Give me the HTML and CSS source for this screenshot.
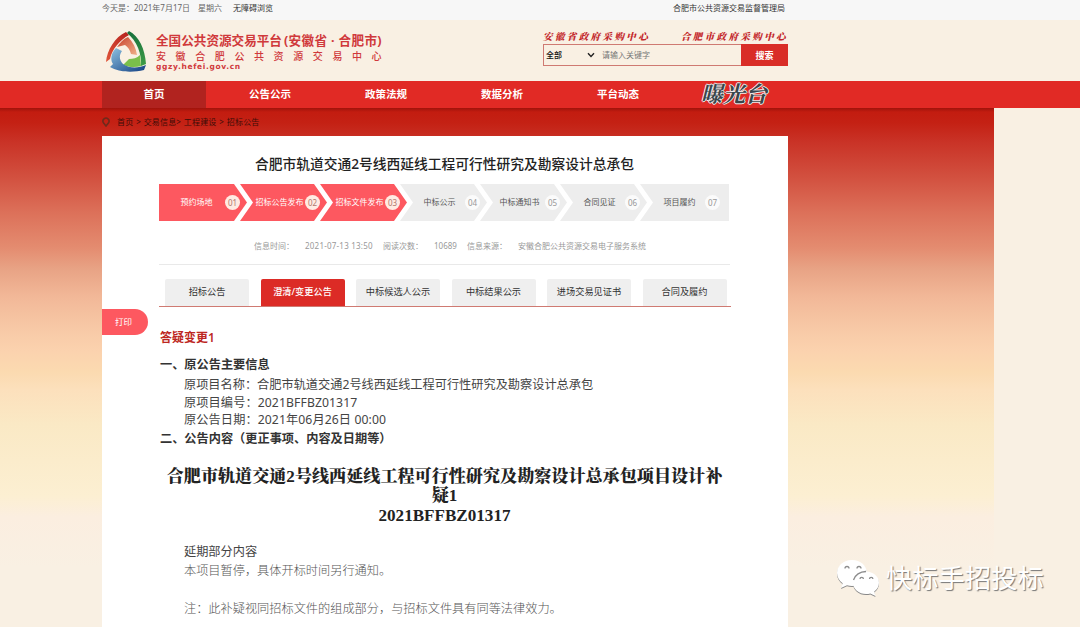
FILE: index.html
```html
<!DOCTYPE html>
<html lang="zh-CN">
  <head>
    <meta charset="UTF-8" />
    <meta name="viewport" content="width=device-width, initial-scale=1.0" />
    <title>安徽合肥公共资源交易中心</title>
    <link rel="stylesheet" href="styles.css">
  </head>
  <body>
    <div class="topbar">
      <div class="container topbar-inner">
        <div class="topbar-left">
          <span>今天是：2021年7月17日</span>
          <span>星期六</span>
          <a class="dark">无障碍浏览</a>
        </div>
        <a class="dark bureau">合肥市公共资源交易监督管理局</a>
      </div>
    </div>

    <header class="header">
      <div class="container header-inner">
        <div class="brand">
          <svg class="logo" viewBox="0 0 42 42" width="42" height="42">
            <defs>
              <linearGradient id="lr" x1="1" y1="0" x2="0" y2="1">
                <stop offset="0" stop-color="#b5211d" />
                <stop offset="1" stop-color="#e0553a" />
              </linearGradient>
              <linearGradient id="lo" x1="0" y1="0" x2="1" y2="1">
                <stop offset="0" stop-color="#c8402c" />
                <stop offset="1" stop-color="#f0b088" />
              </linearGradient>
              <linearGradient id="lg" x1="0" y1="0" x2="0" y2="1">
                <stop offset="0" stop-color="#17703c" />
                <stop offset="1" stop-color="#3f9c46" />
              </linearGradient>
              <linearGradient id="lb" x1="0" y1="0" x2="1" y2="1">
                <stop offset="0" stop-color="#8fc3e2" />
                <stop offset="1" stop-color="#123f82" />
              </linearGradient>
            </defs>
            <path fill="url(#lr)" d="M1 32C2 20 10 7 21 2L24 5C15 10 7 19 5 29Z" />
            <path fill="url(#lo)" d="M23 7C28 12 31 18 32 25L26 24C25 20 23 17 20 15L12 17C15 13 18 9 23 7Z" />
            <path fill="url(#lg)" d="M24 1C34 6 40 19 41 34L36 36C37 24 32 11 22 3Z" />
            <path fill="#7abf4b" d="M35 25L36 36C30 38 23 37 18 35L24 29C28 29 32 28 35 25Z" />
            <path fill="url(#lb)" d="M11 18L17 21C14 25 14 30 18 34C25 39 34 38 41 35L39 40C27 43 13 42 5 37L8 34C5 30 6 23 11 18Z" />
          </svg>
          <div class="brand-text">
            <h1>全国公共资源交易平台<span>(安徽省 · 合肥市)</span></h1>
            <h2>安徽合肥公共资源交易中心</h2>
            <p>ggzy.hefei.gov.cn</p>
          </div>
        </div>
        <div class="search-area">
          <div class="centers">
            <a>安徽省政府采购中心</a>
            <a>合肥市政府采购中心</a>
          </div>
          <div class="search">
            <div class="search-type">
              全部
              <svg viewBox="0 0 8 6" width="8" height="6"><path d="M1 1.2L4 4.4L7 1.2" fill="none" stroke="#222" stroke-width="1.4" /></svg>
            </div>
            <div class="search-input">请输入关键字</div>
            <button>搜索</button>
          </div>
        </div>
      </div>
    </header>

    <nav class="nav">
      <div class="container nav-inner">
        <a class="active">首页</a>
        <a>公告公示</a>
        <a>政策法规</a>
        <a>数据分析</a>
        <a>平台动态</a>
        <a class="expose">曝光台</a>
      </div>
    </nav>

    <div class="page">
      <div class="container">
        <div class="breadcrumb">
          <svg viewBox="0 0 8 10" width="8" height="10"><path d="M4 9L1.6 5.9A3 3 0 1 1 6.4 5.9Z" fill="none" stroke="#6e2a1c" stroke-width="1.6" /></svg>
          <span>首页 &gt; 交易信息&gt; 工程建设 &gt; 招标公告</span>
        </div>

        <div class="paper">
          <a class="print">打印</a>
          <h3 class="title">合肥市轨道交通2号线西延线工程可行性研究及勘察设计总承包</h3>

          <div class="steps">
            <div class="step done"><span>预约场地</span><i>01</i></div>
            <div class="step done"><span>招标公告发布</span><i>02</i></div>
            <div class="step done"><span>招标文件发布</span><i>03</i></div>
            <div class="step"><span>中标公示</span><i>04</i></div>
            <div class="step"><span>中标通知书</span><i>05</i></div>
            <div class="step"><span>合同见证</span><i>06</i></div>
            <div class="step"><span>项目履约</span><i>07</i></div>
          </div>

          <div class="meta">
            <span class="label">信息时间：</span>
            <span class="time">2021-07-13 13:50</span>
            <span class="label">阅读次数：</span>
            <span class="count">10689</span>
            <span class="label">信息来源：</span>
            <span>安徽合肥公共资源交易电子服务系统</span>
          </div>

          <div class="tabs">
            <a>招标公告</a>
            <a class="active">澄清/变更公告</a>
            <a>中标候选人公示</a>
            <a>中标结果公示</a>
            <a>进场交易见证书</a>
            <a>合同及履约</a>
          </div>

          <div class="article">
            <h4 class="change">答疑变更1</h4>
            <h4 class="sec">一、原公告主要信息</h4>
            <p>原项目名称：合肥市轨道交通2号线西延线工程可行性研究及勘察设计总承包</p>
            <p class="wide">原项目编号：2021BFFBZ01317</p>
            <p class="wide">原公告日期：2021年06月26日 00:00</p>
            <h4 class="sec">二、公告内容（更正事项、内容及日期等）</h4>
            <div class="doc-title">
              <div>合肥市轨道交通2号线西延线工程可行性研究及勘察设计总承包项目设计补</div>
              <div>疑1</div>
              <div>2021BFFBZ01317</div>
            </div>
            <p class="delay">延期部分内容</p>
            <p class="song">本项目暂停，具体开标时间另行通知。</p>
            <p class="song note">注：此补疑视同招标文件的组成部分，与招标文件具有同等法律效力。</p>
          </div>
        </div>
      </div>
    </div>

    <div class="watermark">
      <svg viewBox="0 0 44 38" width="44" height="38">
        <g fill="#fff">
          <path d="M16 1C7.5 1 1 6.800 1 14C1 18.200 3.300 21.800 6.700 24.200L5 29L11 26.200C12.600 26.700 14.300 27 16 27C24.500 27 31 21.200 31 14S24.500 1 16 1Z" />
          <path class="front" d="M30 12.500C22.800 12.500 17 17.500 17 23.700S22.800 35 30 35C31.500 35 33 34.800 34.300 34.400L39.500 37L38.200 32.500C41.200 30.400 43 27.300 43 23.700C43 17.500 37.200 12.500 30 12.500Z" />
        </g>
        <path fill="none" stroke="#8c8c8c" stroke-width="1.3" d="M9 9.500A2 2 0 0 1 13 9.500M21 9.500A2 2 0 0 1 25 9.500M24 20A1.700 1.700 0 0 1 27.400 20M33.500 20A1.700 1.700 0 0 1 36.900 20M17.500 21C19 16 24 12.600 30 12.500" />
      </svg>
      <span>快标手招投标</span>
    </div>
  </body>
</html>
```

FILE: styles.css
```css
* {
  margin: 0;
  padding: 0;
  box-sizing: border-box;
}
body {
  background-color: #f9f0e3;
  color: #444;
  font-family: "Noto Sans", "Noto Sans CJK SC", sans-serif;
  height: 627px;
  overflow: hidden;
  white-space: nowrap;
}
.container {
  width: 686px;
  margin-left: 102px;
}

/* top bar */
.topbar {
  height: 20px;
  background-color: #f7f7f7;
  font-size: 8px;
  line-height: 15px;
  color: #666;
}
.topbar-inner {
  display: flex;
  justify-content: space-between;
}
.topbar-left {
  display: flex;
}
.topbar-left span:first-child {
  width: 96px;
}
.topbar-left span:nth-child(2) {
  width: 35px;
}
.dark {
  color: #333;
}
.bureau {
  margin-right: 3px;
}

/* header */
.header {
  height: 61px;
}
.header-inner {
  display: flex;
  justify-content: space-between;
}
.brand {
  display: flex;
  padding: 10px 0 0 3px;
}
.brand-text {
  margin-left: 9px;
  padding-top: 2px;
  color: #d0393b;
}
.brand-text h1 {
  font-size: 12.6px;
  line-height: 18px;
}
.brand-text h1 span {
  margin-left: 2px;
  letter-spacing: 0.35px;
}
.brand-text h2 {
  font-size: 10px;
  line-height: 12px;
  font-weight: 500;
  letter-spacing: 9.6px;
  margin-right: -10px;
}
.brand-text p {
  font-family: "DejaVu Sans", sans-serif;
  font-size: 7.5px;
  line-height: 9px;
  font-weight: bold;
  letter-spacing: 0.65px;
}
.search-area {
  width: 245px;
  padding-top: 10px;
}
.centers {
  display: flex;
  justify-content: space-between;
  height: 14px;
  font-family: "Noto Serif CJK SC", "Noto Sans CJK SC", serif;
  font-size: 9.5px;
  font-style: italic;
  font-weight: 900;
  line-height: 13px;
  letter-spacing: 2.4px;
  color: #c3262a;
}
.search {
  display: flex;
  height: 22px;
  border: 1px solid #cf7a72;
  font-size: 8px;
  line-height: 20px;
}
.search-type {
  width: 58px;
  padding: 0 7px 0 2px;
  display: flex;
  justify-content: space-between;
  align-items: center;
  color: #111;
  font-weight: 500;
}
.search-input {
  flex: 1;
  color: #777;
}
.search button {
  width: 47px;
  margin: -1px;
  border: none;
  background-color: #d92d27;
  color: white;
  font: bold 9px "Noto Sans CJK SC", sans-serif;
}

/* nav */
.nav {
  height: 27px;
  background-color: #e12a25;
}
.nav-inner {
  display: flex;
  gap: 12px;
}
.nav a {
  width: 104px;
  height: 27px;
  line-height: 26px;
  text-align: center;
  color: white;
  font-size: 10.5px;
  font-weight: bold;
}
.nav a.active {
  background-color: #b1231f;
}
.nav a.expose {
  line-height: 23px;
  font-family: "Noto Serif CJK SC", "Noto Sans CJK SC", serif;
  font-size: 22px;
  font-style: italic;
  color: #3b454b;
  text-shadow: -1px 0 #eee, 1px 0 #eee, 0 -1px #eee, 0 1px #eee;
}

/* page background */
.page {
  width: 994px;
  height: 519px;
  background: linear-gradient(
    #9f130b 0,
    #c31c10 4px,
    #c42114 15px,
    #c93226 33px,
    #d2503f 69px,
    #dc7059 104px,
    #e48c70 140px,
    #e8a385 161px,
    #f2b898 189px,
    #f8cba8 225px,
    #fbd2ae 243px,
    #fbdab0 264px,
    #fce0bc 282px,
    #fae9c5 317px,
    #fcefd2 388px,
    #fbeee0 409px,
    #f9f0e3 459px
  );
}
.breadcrumb {
  height: 28px;
  display: flex;
  align-items: center;
  gap: 7px;
  font-size: 8px;
  letter-spacing: 0.15px;
  word-spacing: 0.6px;
  color: #3d0d08;
  padding-bottom: 1px;
}
.paper {
  position: relative;
  height: 491px;
  padding: 0 58px 0 57px;
  background-color: white;
}
.print {
  position: absolute;
  left: 0;
  top: 173px;
  width: 46px;
  height: 26px;
  line-height: 25px;
  padding-right: 3px;
  border-radius: 0 13px 13px 0;
  background-color: #fd5860;
  color: white;
  font-size: 8.5px;
  text-align: center;
}
.title {
  padding-top: 17px;
  height: 48px;
  line-height: 22px;
  font-size: 13.75px;
  font-weight: 500;
  text-align: center;
  color: #222;
}

/* progress arrows */
.steps {
  display: flex;
  height: 37px;
}
.step {
  width: 87px;
  margin-left: -7px;
  padding: 0 7px 0 14px;
  display: flex;
  align-items: center;
  background-color: #ededed;
  clip-path: polygon(0 0, 74px 0, 87px 50%, 74px 100%, 0 100%, 13px 50%);
  font-size: 8px;
  color: #555;
}
.step:first-child {
  width: 88px;
  margin-left: 0;
  padding-left: 9px;
  clip-path: polygon(0 0, 75px 0, 88px 50%, 75px 100%, 0 100%);
}
.step:last-child {
  width: 89px;
  padding-right: 9px;
  clip-path: polygon(0 0, 100% 0, 100% 100%, 0 100%, 13px 50%);
}
.step span {
  flex: 1;
  display: flex;
  justify-content: center;
  padding-bottom: 2px;
}
.step i {
  width: 15px;
  height: 15px;
  line-height: 15px;
  border-radius: 50%;
  background-color: #fbfbfb;
  color: #999;
  font-style: normal;
  text-align: center;
}
.step.done {
  background-color: #fd5860;
  color: white;
}
.step.done i {
  background-color: #ffebe3;
  color: #b0786f;
}

.meta {
  display: flex;
  justify-content: center;
  height: 44px;
  padding: 19px 0 0 11px;
  font-size: 8px;
  line-height: 12px;
  color: #999;
  border-bottom: 1px solid #e9e9e9;
}
.meta .label {
  width: 51px;
}
.meta .time {
  width: 78px;
  letter-spacing: 0.22px;
}
.meta .count {
  width: 33px;
}

/* tabs */
.tabs {
  display: flex;
  gap: 11.5px;
  height: 42px;
  padding: 14px 0 0 6px;
  margin-right: -1px;
  border-bottom: 1px solid #cf7a72;
}
.tabs a {
  width: 84px;
  line-height: 26px;
  border-radius: 2px 2px 0 0;
  background-color: #efefef;
  color: #333;
  font-size: 9.2px;
  text-align: center;
}
.tabs a.active {
  background-color: #dc2b26;
  color: white;
  font-weight: 500;
}

/* article */
.article {
  padding: 22px 0 0 1px;
  font-size: 12.2px;
  color: #444;
}
.article p {
  height: 17.5px;
  line-height: 17.5px;
  padding-left: 24px;
}
.article .wide {
  letter-spacing: 0.1px;
}
.article .change {
  line-height: 18px;
  font-size: 12px;
  font-weight: 600;
  color: #bd2722;
}
.article .sec {
  height: 20px;
  line-height: 20px;
  font-size: 12.2px;
  color: #333;
}
.article .change + .sec {
  margin-top: 8px;
  margin-bottom: 1px;
}
.doc-title {
  margin: 18px 0 17px -1px;
  font-family: "Liberation Serif", "Noto Serif CJK SC", "Noto Sans CJK SC", serif;
  font-size: 17.1px;
  font-weight: 900;
  line-height: 19.5px;
  text-align: center;
  color: #222;
}
.article .delay {
  height: 19px;
  line-height: 19px;
}
.article .song {
  font-family: "Noto Sans CJK SC", sans-serif;
  font-weight: 300;
  line-height: 18px;
  color: #555;
}
.article .note {
  margin-top: 20px;
}

/* watermark over the page */
.watermark {
  position: absolute;
  left: 836px;
  top: 559px;
  display: flex;
  align-items: center;
  gap: 6px;
  color: #fff;
  font-size: 26.3px;
  font-weight: 400;
  line-height: 38px;
  text-shadow: 1px 1px 1px #777;
}
.watermark svg {
  overflow: visible;
  filter: drop-shadow(0.5px 1px 0.5px #888);
}
```
